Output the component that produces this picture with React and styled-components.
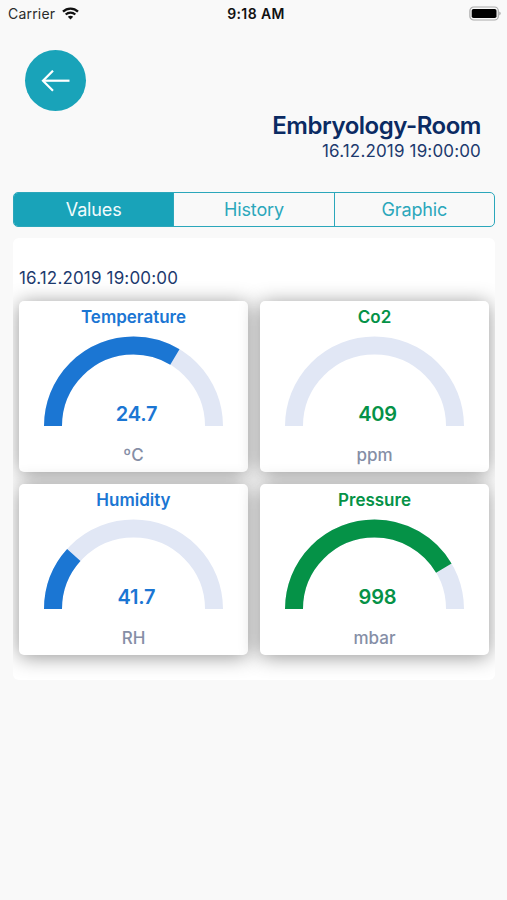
import styled, { createGlobalStyle } from "styled-components";

const GlobalStyle = createGlobalStyle`
  * {
    box-sizing: border-box;
  }
  body {
    margin: 0;
    background-color: #f9f9f9;
    font-family: Inter, "Liberation Sans", sans-serif;
  }
`;

// styled-components

const Screen = styled.div`
  width: 507px;
  height: 900px;
  overflow: hidden;
  background-color: #f9f9f9;
`;

const StatusBar = styled.div`
  display: grid;
  grid-template-columns: 1fr auto 1fr;
  align-items: center;
  height: 27px;
  padding: 0 6px 0 8px;
`;

const Carrier = styled.div`
  display: flex;
  align-items: center;
  gap: 7px;
  color: #2b2b2b;
  font-size: 14px;
  letter-spacing: 0.2px;
`;

const Clock = styled.div`
  padding-left: 3px;
  color: #111;
  font-size: 14px;
  font-weight: 600;
  letter-spacing: 0.4px;
`;

const Battery = styled.svg`
  justify-self: end;
`;

const Header = styled.header`
  display: flex;
  flex-direction: column;
  height: 165px;
  padding: 23px 26px 0 25px;
`;

const BackButton = styled.button`
  display: flex;
  align-items: center;
  justify-content: center;
  width: 61px;
  height: 61px;
  padding: 0;
  border: none;
  border-radius: 50%;
  background-color: #19a3b9;
  cursor: pointer;
`;

const RoomName = styled.h1`
  margin: 0;
  color: #0b2b63;
  font-size: 24px;
  font-weight: 600;
  letter-spacing: -0.47px;
  line-height: 30px;
  text-align: right;
`;

const DateText = styled.div`
  color: #1d3a6e;
  font-size: 17px;
  letter-spacing: 0.16px;
  line-height: 20px;
`;

const RoomDate = styled(DateText)`
  text-align: right;
`;

const Tabs = styled.div`
  display: flex;
  height: 35px;
  margin: 0 12px 0 13px;
  border: 1px solid #2ba7bb;
  border-radius: 5px;
  overflow: hidden;
`;

const Tab = styled.button`
  flex: 1;
  padding: 0;
  border: none;
  border-left: ${({ $first }) => ($first ? "none" : "1px solid #2ba7bb")};
  background-color: ${({ $active }) => ($active ? "#19a3b9" : "transparent")};
  color: ${({ $active }) => ($active ? "#f2fbfc" : "#2ba7bb")};
  font-family: inherit;
  font-size: 18px;
  letter-spacing: -0.15px;
  cursor: pointer;
`;

const Panel = styled.section`
  height: 442px;
  margin: 11px 12px 0 13px;
  padding: 30px 6px 0;
  border-radius: 6px;
  background-color: #fff;
  overflow: hidden;
`;

const PanelDate = styled(DateText)`
  height: 33px;
`;

const CardGrid = styled.div`
  display: grid;
  grid-template-columns: 1fr 1fr;
  gap: 12px;
`;

const Card = styled.div`
  display: flex;
  flex-direction: column;
  align-items: center;
  height: 171px;
  padding-top: 6px;
  border-radius: 5px;
  background-color: #fff;
  box-shadow: 0 2px 20px rgba(0, 0, 0, 0.42);
`;

const CardTitle = styled.h2`
  margin: 0;
  color: ${({ $color }) => $color};
  font-size: 17px;
  font-weight: 600;
  line-height: 21px;
`;

const Gauge = styled.svg`
  display: block;
  margin-top: 8px;
`;

const Reading = styled.div`
  height: 20px;
  margin-top: -22px;
  padding-left: 6px;
  color: ${({ $color }) => $color};
  font-size: 20px;
  font-weight: 600;
  letter-spacing: -0.2px;
  line-height: 20px;
`;

const Unit = styled.div`
  margin-top: 21px;
  color: #858ea6;
  font-size: 17px;
  font-weight: 500;
  line-height: 20px;
`;

const BLUE = "#1b76d3";
const GREEN = "#059247";

const sensors = [
  { id: 1, name: "Temperature", value: "24.7", unit: "ºC", color: BLUE, ratio: 0.672 },
  { id: 2, name: "Co2", value: "409", unit: "ppm", color: GREEN, ratio: 0 },
  { id: 3, name: "Humidity", value: "41.7", unit: "RH", color: BLUE, ratio: 0.234 },
  { id: 4, name: "Pressure", value: "998", unit: "mbar", color: GREEN, ratio: 0.83 },
];

const ARC = "M9 90 A80.5 80.5 0 0 1 170 90";

const SensorCard = ({ sensor }) => {
  return (
    <Card>
      <CardTitle $color={sensor.color}>{sensor.name}</CardTitle>
      <Gauge width="179" height="90" viewBox="0 0 179 90" fill="none" strokeWidth="18">
        <path d={ARC} stroke="#e1e7f5" />
        {sensor.ratio > 0 && (
          <path
            d={ARC}
            stroke={sensor.color}
            pathLength="1"
            strokeDasharray={`${sensor.ratio} 2`}
          />
        )}
      </Gauge>
      <Reading $color={sensor.color}>{sensor.value}</Reading>
      <Unit>{sensor.unit}</Unit>
    </Card>
  );
};

const tabs = ["Values", "History", "Graphic"];

const App = () => {
  return (
    <Screen>
      <GlobalStyle />
      <StatusBar>
        <Carrier>
          Carrier
          <svg width="17" height="13" viewBox="0 0 17 13" fill="none">
            <path d="M1 4.6 C5.2 0.5 11.8 0.5 16 4.6" stroke="#111" strokeWidth="2.3" />
            <path d="M3.7 7.5 C6.4 4.9 10.6 4.9 13.3 7.5" stroke="#111" strokeWidth="2.2" />
            <path d="M8.5 12.6 L5.8 9.8 C7.3 8.4 9.7 8.4 11.2 9.8 Z" fill="#111" />
          </svg>
        </Carrier>
        <Clock>9:18 AM</Clock>
        <Battery width="32" height="15" viewBox="0 0 32 15">
          <rect x="0.9" y="1" width="28.4" height="13" rx="3.8" fill="#f9f9f9" stroke="#aaa" strokeWidth="1.2" />
          <rect x="2.7" y="2.9" width="24.8" height="9.2" rx="1.8" fill="#000" />
          <path d="M30.4 5.6 C32 6.3 32 8.7 30.4 9.4 Z" fill="#999" />
        </Battery>
      </StatusBar>
      <Header>
        <BackButton aria-label="Back">
          <svg width="29" height="22" viewBox="0 0 29 22" fill="none" stroke="#fff" strokeWidth="2.2">
            <path d="M28.5 10.7 H2" />
            <path d="M12 0.7 L2 10.7 L12 20.7" />
          </svg>
        </BackButton>
        <RoomName>Embryology-Room</RoomName>
        <RoomDate>16.12.2019 19:00:00</RoomDate>
      </Header>
      <Tabs>
        {tabs.map((tab, index) => (
          <Tab key={tab} $active={index === 0} $first={index === 0}>
            {tab}
          </Tab>
        ))}
      </Tabs>
      <Panel>
        <PanelDate>16.12.2019 19:00:00</PanelDate>
        <CardGrid>
          {sensors.map((sensor) => (
            <SensorCard key={sensor.id} sensor={sensor} />
          ))}
        </CardGrid>
      </Panel>
    </Screen>
  );
};

export default App;
